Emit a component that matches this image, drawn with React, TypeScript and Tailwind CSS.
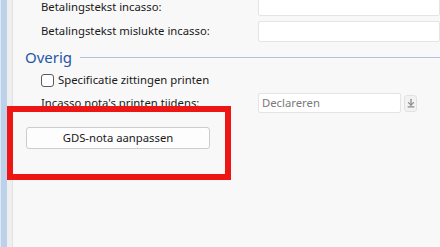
import { ArrowDownToLine } from "lucide-react";

const font = { fontFamily: '"Noto Sans", "Open Sans", sans-serif' };

function Row({ label, children, nudge }: { label: string; children: React.ReactNode; nudge?: boolean }) {
  return (
    <div className="flex h-[21px] items-center">
      <span
        className={
          nudge
            ? "mt-[4px] w-[217px] shrink-0 text-[11.3px] text-[#1a1a1a]"
            : "w-[217px] shrink-0 text-[11.3px] text-[#1a1a1a]"
        }
      >
        {label}
      </span>
      {children}
    </div>
  );
}

export default function App() {
  return (
    <div
      className="relative flex h-[247px] w-[440px] overflow-hidden bg-[#f8f8f8]"
      style={font}
    >
      <div className="w-[1px] shrink-0 bg-[#dfe8f3]" />
      <div className="w-[6px] shrink-0 bg-[#bcd2ea]" />
      <div className="w-[6px] shrink-0 border-r border-[#e2e2e2] bg-[#efefef]" />

      <div className="flex min-w-0 flex-1 flex-col">
        <div className="mt-[-5px] flex flex-col gap-[5px] pl-[28px]">
          <Row label="Betalingstekst incasso:" nudge>
            <div className="h-[21px] flex-1 rounded-[2px] border border-[#e4e4e4] bg-white" />
          </Row>
          <Row label="Betalingstekst mislukte incasso:">
            <div className="h-[21px] flex-1 rounded-[2px] border border-[#e4e4e4] bg-white" />
          </Row>
        </div>

        <div className="mt-[5px] flex h-[20px] items-center pl-[12px]">
          <span className="text-[15px] leading-none text-[#1f56a8]">Overig</span>
          <div className="ml-[8px] h-px flex-1 bg-[#b3c2da]" />
        </div>

        <label className="mt-[6px] flex h-[15px] items-center gap-[4px] pl-[28px]">
          <span className="h-[13px] w-[13px] rounded-[3px] border border-[#5a5a5a] bg-white" />
          <span className="text-[11.3px] text-[#1a1a1a]">Specificatie zittingen printen</span>
        </label>

        <div className="mt-[5px] flex h-[20px] items-center pl-[28px]">
          <span className="w-[217px] shrink-0 text-[11.3px] text-[#1a1a1a]">
            Incasso nota&apos;s printen tijdens:
          </span>
          <div className="flex h-[20px] w-[143px] items-center rounded-[2px] border border-[#e4e4e4] bg-white pl-[3px] text-[11.3px] text-[#7a7a7a]">
            Declareren
          </div>
          <div className="ml-[3px] flex h-[17px] w-[13px] items-center justify-center rounded-[3px] border border-[#e2e2e2] bg-[#f2f2f2]">
            <ArrowDownToLine className="h-[10px] w-[10px] text-[#8a8a8a]" strokeWidth={3} />
          </div>
        </div>

        <div className="mt-[14px] pl-[13px]">
          <button
            type="button"
            className="flex h-[22px] w-[184px] items-center justify-center rounded-[3px] border border-[#cccccc] bg-[#fdfdfd] text-[11.3px] text-[#1a1a1a]"
          >
            GDS-nota aanpassen
          </button>
        </div>
      </div>

      {/* annotation box */}
      <div className="pointer-events-none absolute left-[7px] top-[106px] h-[74px] w-[224px] border-[6px] border-[#ee1515]" />
    </div>
  );
}
